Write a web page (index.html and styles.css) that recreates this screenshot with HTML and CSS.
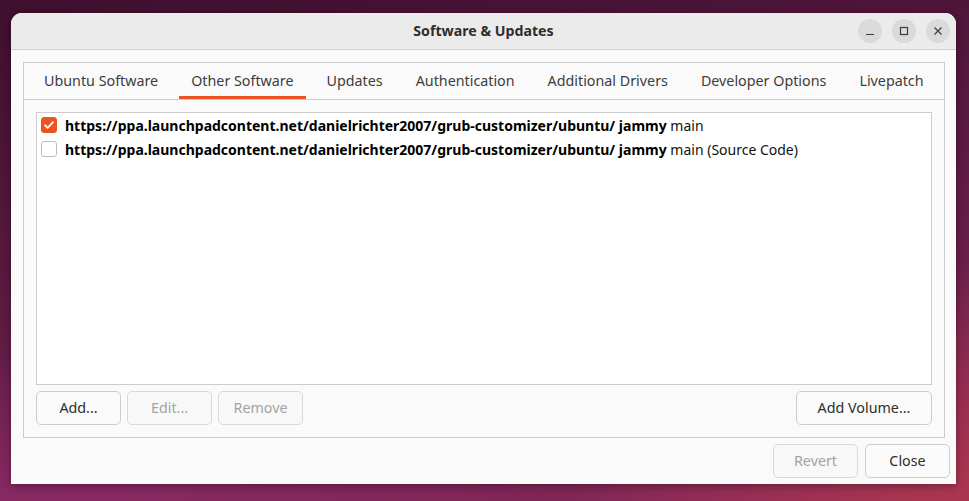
FILE: index.html
```html
<!DOCTYPE html>
<html lang="en">
<head>
<meta charset="utf-8">
<title>Software &amp; Updates</title>
<link rel="stylesheet" href="styles.css">
</head>
<body>
<div class="desktop">
  <div class="window">
    <header class="titlebar">
      <div class="title">Software &amp; Updates</div>
      <div class="controls">
        <span class="ctl"><svg width="24" height="24" viewBox="0 0 24 24"><path d="M8 15.5h8" stroke="#3d3d3d" stroke-width="1.2"/></svg></span>
        <span class="ctl"><svg width="24" height="24" viewBox="0 0 24 24"><rect x="8.5" y="8.5" width="7" height="7" fill="none" stroke="#3d3d3d" stroke-width="1.2"/></svg></span>
        <span class="ctl"><svg width="24" height="24" viewBox="0 0 24 24"><path d="M8.5 8.5l7 7M15.5 8.5l-7 7" stroke="#3d3d3d" stroke-width="1.2"/></svg></span>
      </div>
    </header>
    <main class="body">
      <section class="notebook">
        <nav class="tabs">
          <span class="tab">Ubuntu Software</span>
          <span class="tab active">Other Software</span>
          <span class="tab">Updates</span>
          <span class="tab">Authentication</span>
          <span class="tab">Additional Drivers</span>
          <span class="tab">Developer Options</span>
          <span class="tab">Livepatch</span>
        </nav>
        <div class="page">
          <div class="list">
            <div class="row">
              <span class="check on"><svg width="16" height="16" viewBox="0 0 16 16"><path d="M4 8.2l2.6 2.6L12 5.2" fill="none" stroke="#fff" stroke-width="1.8" stroke-linecap="round" stroke-linejoin="round"/></svg></span>
              <span class="src"><b>https://ppa.launchpadcontent.net/danielrichter2007/grub-customizer/ubuntu/ jammy</b> main</span>
            </div>
            <div class="row">
              <span class="check"></span>
              <span class="src"><b>https://ppa.launchpadcontent.net/danielrichter2007/grub-customizer/ubuntu/ jammy</b> main (Source Code)</span>
            </div>
          </div>
          <div class="btnrow">
            <button class="btn">Add...</button>
            <button class="btn" disabled>Edit...</button>
            <button class="btn" disabled>Remove</button>
            <span class="spacer"></span>
            <button class="btn wide">Add Volume...</button>
          </div>
        </div>
      </section>
      <div class="actions">
        <button class="btn" disabled>Revert</button>
        <button class="btn">Close</button>
      </div>
    </main>
  </div>
</div>
</body>
</html>
```

FILE: styles.css
```css
* { box-sizing: border-box; }
html, body { margin: 0; padding: 0; }
body {
  width: 969px;
  height: 501px;
  overflow: hidden;
  font-family: "Noto Sans", "Open Sans", sans-serif;
  font-size: 14px;
  color: #3d3d3d;
}
.desktop {
  width: 969px;
  height: 501px;
  padding: 13px 13px 17px 11px;
  background:
    radial-gradient(ellipse 420px 260px at 990px 520px, #b0374f 0%, rgba(176,55,79,0) 100%),
    radial-gradient(ellipse 520px 200px at 60px 540px, #8e2b68 0%, rgba(142,43,104,0) 100%),
    linear-gradient(170deg, #3f0f2e 0%, #55183e 35%, #6a1f4a 65%, #8a2a5c 100%);
}
.window {
  width: 945px;
  height: 471px;
  background: #fafafa;
  border-radius: 11px 11px 0 0;
  display: flex;
  flex-direction: column;
  box-shadow: 0 2px 8px rgba(0,0,0,0.35);
  overflow: hidden;
}
.titlebar {
  height: 37px;
  flex: none;
  background: #ebebeb;
  border-bottom: 1px solid #cfcfcf;
  display: flex;
  align-items: center;
  justify-content: center;
  position: relative;
  padding-bottom: 1px;
}
.title {
  font-weight: bold;
  font-size: 14.2px;
  color: #2e2e2e;
}
.controls {
  position: absolute;
  right: 6px;
  top: 6px;
  display: flex;
  gap: 10px;
}
.ctl {
  width: 24px;
  height: 24px;
  border-radius: 50%;
  background: #dadada;
  display: block;
}
.ctl svg { display: block; }
.body {
  flex: 1;
  display: flex;
  flex-direction: column;
  padding: 12px 11px 7px 12px;
}
.notebook {
  border: 1px solid #cdcdcd;
  height: 376px;
  display: flex;
  flex-direction: column;
  background: #fafafa;
}
.tabs {
  height: 37px;
  flex: none;
  display: flex;
  align-items: stretch;
  padding-left: 8px;
  gap: 9px;
  border-bottom: 1px solid #cdcdcd;
}
.tab {
  padding: 1px 12px 0;
  display: flex;
  align-items: center;
  color: #3d3d3d;
  font-size: 14.3px;
  border-bottom: 3px solid transparent;
  white-space: nowrap;
}
.tab.active { border-bottom-color: #e95420; }
.page {
  flex: 1;
  display: flex;
  flex-direction: column;
  padding: 12px;
}
.list {
  flex: 1;
  background: #ffffff;
  border: 1px solid #cdcdcd;
  padding: 0 0 0 4px;
}
.row {
  height: 24px;
  display: flex;
  align-items: center;
  gap: 8px;
  color: #111;
  white-space: nowrap;
}
.check {
  width: 16px;
  height: 16px;
  border-radius: 3px;
  border: 1px solid #bdbdbd;
  background: #fff;
  flex: none;
  display: block;
  margin-top: -1px;
}
.check.on {
  background: #e95420;
  border-color: #e95420;
}
.check.on svg { display: block; margin: -1px; }
.src b { font-weight: bold; color: #000; }
.btnrow {
  display: flex;
  gap: 6px;
  margin-top: 6px;
  flex: none;
}
.spacer { flex: 1; }
.btn {
  font-family: inherit;
  font-size: 14.3px;
  height: 34px;
  width: 85px;
  border: 1px solid #cdcdcd;
  border-radius: 5px;
  background: #fafafa;
  color: #2e2e2e;
  padding: 0 0 1px;
}
.btn:disabled {
  color: #a3a3a3;
  border-color: #d8d8d8;
  background: #f8f8f8;
}
.btn.wide { width: 136px; }
.actions {
  margin-top: 6px;
  display: flex;
  justify-content: flex-end;
  gap: 7px;
  margin-right: -5px;
}
```
